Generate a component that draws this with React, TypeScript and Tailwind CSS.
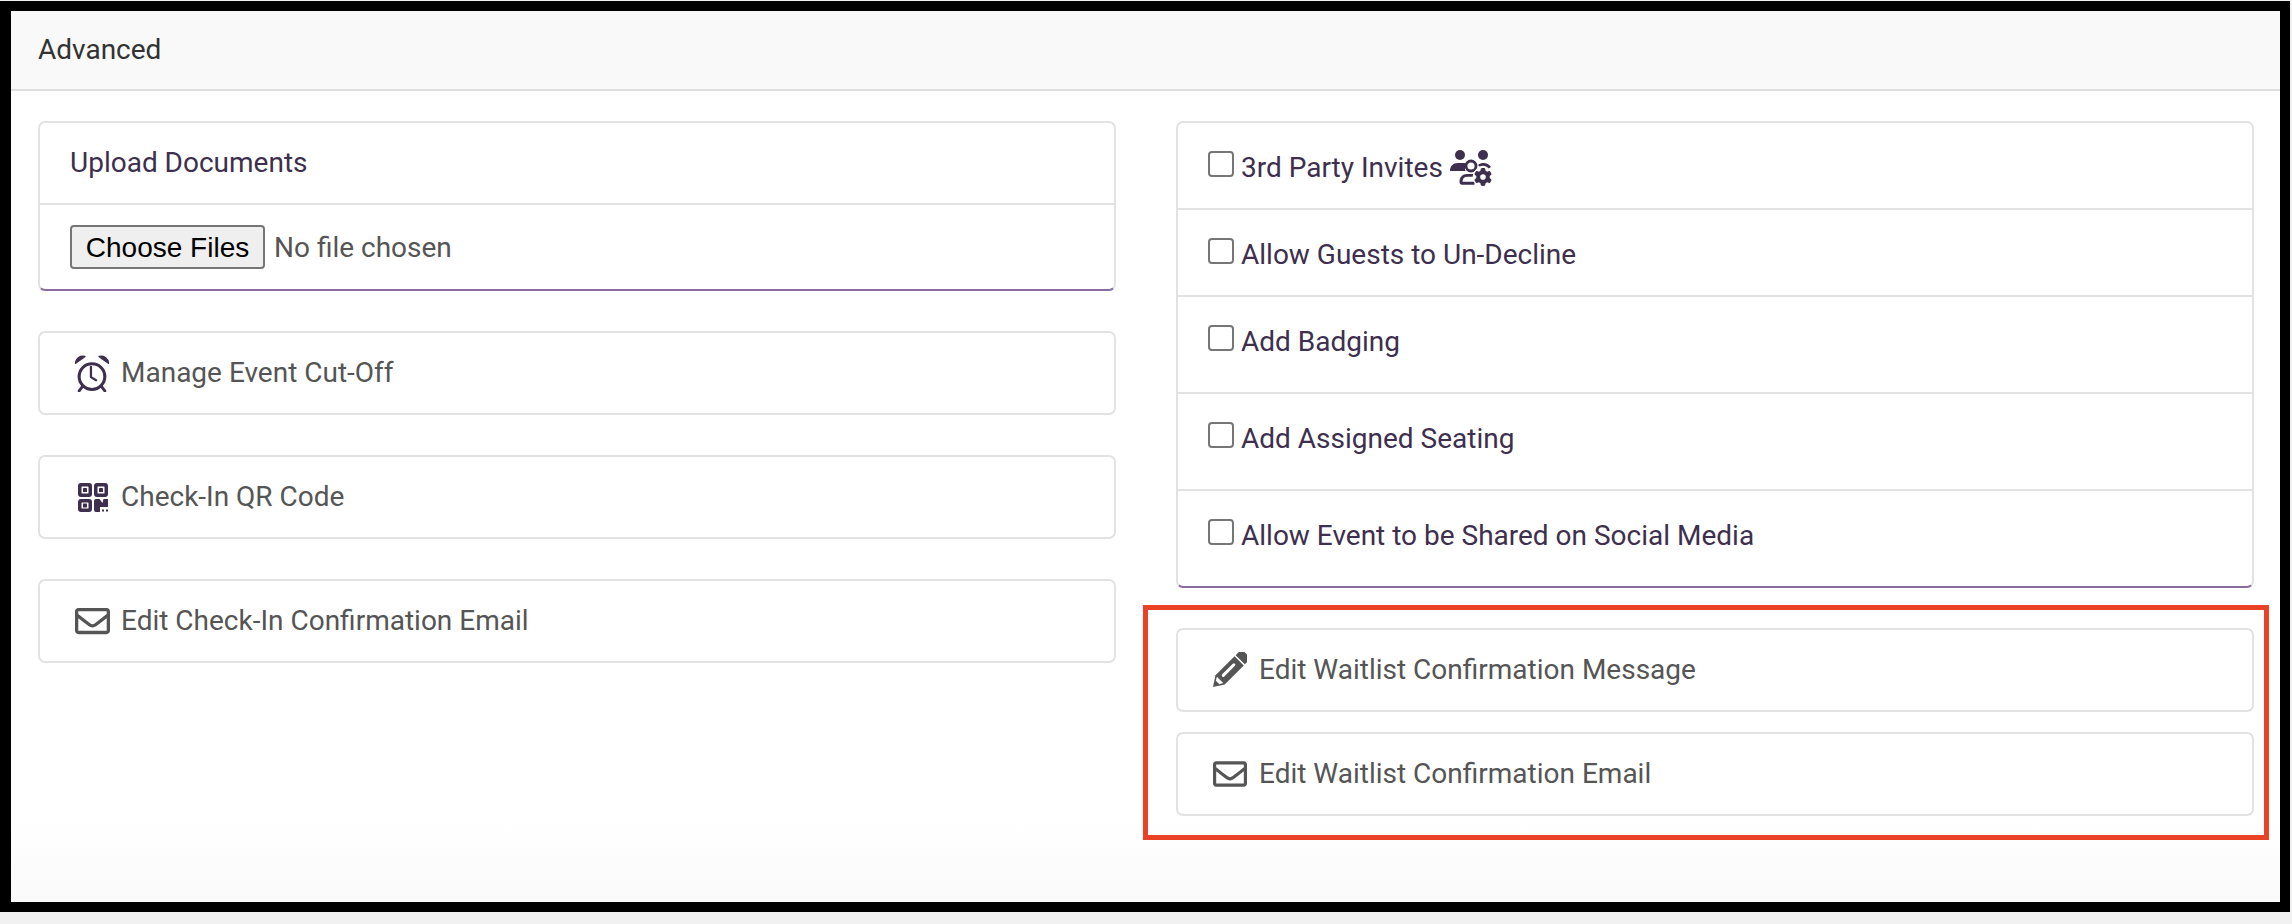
import { FaRegEnvelope } from "react-icons/fa";
import { FaGear } from "react-icons/fa6";
import type { ReactNode } from "react";

const AlarmIcon = () => (
    <svg viewBox="0 0 34 36" className="w-[35px] h-[37px] text-[#3d2f4d]" fill="none" stroke="currentColor">
        <circle cx="16.500" cy="21" r="12.500" strokeWidth="3" />
        <path d="M15.500 11.500v10l5 3" strokeWidth="2.200" strokeLinecap="round" strokeLinejoin="round" />
        <path d="M7 31l-3 4M26 31l3 4" strokeWidth="2.800" strokeLinecap="round" />
        <path d="M0.500 8C1 3 5 0.500 9.500 1.500L0.500 8zM32.500 8C32 3 28 0.500 23.500 1.500L32.500 8z" fill="currentColor" strokeWidth="1.500" strokeLinejoin="round" />
    </svg>
);

const QrIcon = () => (
    <svg viewBox="0 0 30 30" className="w-[32px] h-[30px] text-[#3d2f4d]" fill="currentColor">
        <path fillRule="evenodd" d="M3 1h8a3 3 0 0 1 3 3v8a3 3 0 0 1-3 3H3a3 3 0 0 1-3-3V4a3 3 0 0 1 3-3zm1 3.500a.5.5 0 0 0-.5.5v6a.5.5 0 0 0 .5.5h6a.5.5 0 0 0 .5-.5V5a.5.5 0 0 0-.5-.5H4z" />
        <rect x="5" y="6" width="4" height="4" rx="0.5" />
        <path fillRule="evenodd" d="M19 1h8a3 3 0 0 1 3 3v8a3 3 0 0 1-3 3h-8a3 3 0 0 1-3-3V4a3 3 0 0 1 3-3zm1 3.500a.5.5 0 0 0-.5.5v6a.5.5 0 0 0 .5.5h6a.5.5 0 0 0 .5-.5V5a.5.5 0 0 0-.5-.5h-6z" />
        <rect x="21" y="6" width="4" height="4" rx="0.5" />
        <path fillRule="evenodd" d="M3 17h8a3 3 0 0 1 3 3v7a3 3 0 0 1-3 3H3a3 3 0 0 1-3-3v-7a3 3 0 0 1 3-3zm1 3.500a.5.5 0 0 0-.5.5v5a.5.5 0 0 0 .5.5h6a.5.5 0 0 0 .5-.5v-5a.5.5 0 0 0-.5-.5H4z" />
        <rect x="5" y="21.500" width="4" height="4" rx="0.5" />
        <path d="M18 17h3.500l3 4 1-4H30v8h-6l-2 0v5h-4a2 2 0 0 1-2-2v-9a2 2 0 0 1 2-2z" />
        <rect x="24" y="27.500" width="2" height="2" />
        <rect x="28" y="27.500" width="2" height="2" />
    </svg>
);

const PencilIcon = () => (
    <svg viewBox="0 0 35 36" className="w-[35px] h-[36px] text-[#555555]" fill="currentColor">
        <g transform="translate(1 35) rotate(-45)">
            <path d="M0 0L10 -6.500H37V6.500H10Z" />
            <path d="M38.500 -6.500H43A4 4 0 0 1 47 -2.500V2.500A4 4 0 0 1 43 6.500H38.500Z" />
            <rect x="14" y="-2.500" width="18" height="3" rx="1.500" fill="#ffffff" />
            <path d="M6.500 -2.500L10 -4.500V4.500L6.500 2.500Z" fill="#ffffff" />
        </g>
    </svg>
);

// two solid guests, one outlined guest and a small gear
const ThirdPartyIcon = () => (
    <svg viewBox="0 0 43 36" className="w-[43px] h-[36px] text-[#3d2f4d]" fill="currentColor">
        <circle cx="10" cy="5" r="5" />
        <path d="M0 21c0-5 3-8 8-8h5c2 0 3 .5 4 1.500-2 2-2.500 4.500-1.500 6.500H0z" />
        <circle cx="33" cy="5" r="5" />
        <path d="M28 15c4-3 10-2.500 13 2l-2.500 1.500c-2-3-6-3.500-9-2z" />
        <circle cx="21" cy="16" r="5" fill="none" stroke="currentColor" strokeWidth="2.800" />
        <path d="M17 24h8v2.800h-8c-3 0-4.500 2-4.500 5h12v3H12c-1.500 0-2.500-1-2.500-3 0-4.500 3-7.800 7.500-7.800z" />
        <circle cx="32.500" cy="27" r="10" fill="#ffffff" />
        <FaGear x="24" y="18" size={18} />
    </svg>
);

const LinkCard = ({ icon, label, right }: { icon: ReactNode; label: string; right?: boolean }) => (
    <div className={`h-[84px] rounded-[7px] border-2 border-[#e2e2e2] flex items-center ${right ? "pl-[34px]" : "pl-[35px]"}`}>
        <span className={`w-[35px] flex items-center justify-center shrink-0 ${right ? "mr-[12px]" : "mr-[11px]"}`}>{icon}</span>
        <span className="text-[#555555]">{label}</span>
    </div>
);

const options = [
    { label: "3rd Party Invites", height: "h-[87px]", extra: <ThirdPartyIcon /> },
    { label: "Allow Guests to Un-Decline", height: "h-[87px]" },
    { label: "Add Badging", height: "h-[97px]" },
    { label: "Add Assigned Seating", height: "h-[97px]" },
    { label: "Allow Event to be Shared on Social Media", height: "h-[99px]" },
];

export default function App() {
    return (
        <div className="h-[924px] w-[2292px] bg-[#f1f1f1] pt-px overflow-hidden text-[28px] font-['Roboto',sans-serif]">
            <div className="w-[2290px] h-[911px] border-[10px] border-l-[11px] border-black bg-white flex flex-col">
                <div className="h-[80px] bg-[#f9f9f9] border-b-2 border-[#dfdfdf] flex items-center pl-[27px] text-[#333333]">
                    Advanced
                </div>
                <div className="flex-1 flex bg-gradient-to-b from-white from-90% to-[#fafafa] pl-[27px] pt-[30px]">
                    <div className="w-[1078px] flex flex-col gap-[40px]">
                        <div className="h-[170px] rounded-[7px] border-2 border-[#e2e2e2] border-b-[#8a6d9c] text-[#3d2f4d]">
                            <div className="h-[82px] border-b-2 border-[#e2e2e2] flex items-center pl-[30px]">
                                Upload Documents
                            </div>
                            <div className="pl-[30px] pt-[20px]">
                                <input
                                    type="file"
                                    multiple
                                    className="text-[#555555] file:h-[44px] file:w-[195px] file:mr-[9px] file:bg-[#efefef] file:border-2 file:border-[#767676] file:rounded-[4px] file:text-black file:font-['Liberation_Sans',sans-serif]"
                                />
                            </div>
                        </div>
                        <LinkCard icon={<AlarmIcon />} label="Manage Event Cut-Off" />
                        <LinkCard icon={<QrIcon />} label="Check-In QR Code" />
                        <LinkCard icon={<FaRegEnvelope size={36} className="text-[#555555]" />} label="Edit Check-In Confirmation Email" />
                    </div>
                    <div className="w-[1126px] ml-[27px] flex flex-col">
                        <div className="ml-[33px] mr-[15px] h-[467px] rounded-[7px] border-2 border-[#e2e2e2] border-b-[#8a6d9c] text-[#3d2f4d] divide-y-2 divide-[#e2e2e2]">
                            {options.map((o) => (
                                <label key={o.label} className={`${o.height} flex items-start pl-[30px] pt-[28px]`}>
                                    <input
                                        type="checkbox"
                                        className="appearance-none w-[26px] h-[26px] border-2 border-[#767676] rounded-[4px] bg-white mr-[7px] shrink-0"
                                    />
                                    <span className="mt-[2px] leading-[30px]">{o.label}</span>
                                    {o.extra && <span className="ml-[7px] -mt-[1px]">{o.extra}</span>}
                                </label>
                            ))}
                        </div>
                        <div className="mt-[17px] h-[235px] border-[5px] border-[#ea4227] pl-[28px] pr-[10px] pt-[18px] flex flex-col gap-[20px]">
                            <LinkCard right icon={<PencilIcon />} label="Edit Waitlist Confirmation Message" />
                            <LinkCard right icon={<FaRegEnvelope size={34} className="text-[#555555]" />} label="Edit Waitlist Confirmation Email" />
                        </div>
                    </div>
                </div>
            </div>
        </div>
    );
}
